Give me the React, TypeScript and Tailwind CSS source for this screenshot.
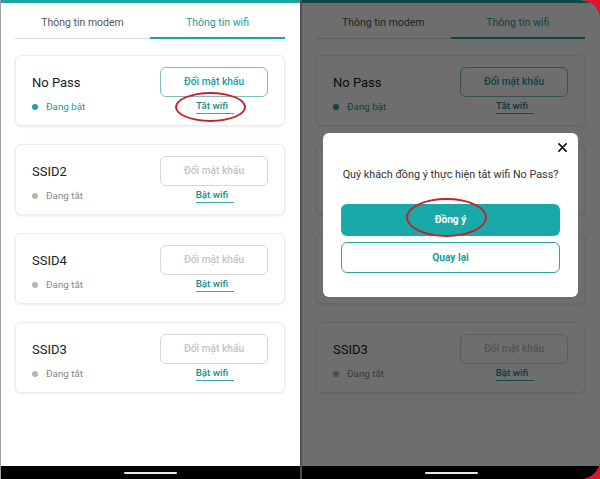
import React from "react";

type Network = {
  name: string;
  on: boolean;
};

const networks: Network[] = [
  { name: "No Pass", on: true },
  { name: "SSID2", on: false },
  { name: "SSID4", on: false },
  { name: "SSID3", on: false },
];

function WifiCard({ network, circled, covered }: { network: Network; circled?: boolean; covered?: boolean }) {
  // covered cards sit fully under the dialog, so only their box shows
  return (
    <div className="flex h-[71px] justify-between rounded-[6px] border border-[#ececec] bg-white pl-[16px] pr-[16px] pt-[11px] shadow-[0_1px_3px_rgba(0,0,0,0.08)]">
      <div className={`flex flex-col ${covered ? "invisible" : ""}`}>
        <p className="mt-[6px] text-[13px] leading-[20px] text-[#222]">{network.name}</p>
        <div className="mt-[7px] flex items-center gap-[8px] text-[9.8px] leading-[14px]">
          <span className={`h-[6px] w-[6px] rounded-full ${network.on ? "bg-[#1ba3a3]" : "bg-[#b5b5b5]"}`} />
          <span className={network.on ? "text-[#189c9c]" : "text-[#888]"}>{network.on ? "Đang bật" : "Đang tắt"}</span>
        </div>
      </div>
      <div className={`flex w-[108px] flex-col items-center ${covered ? "invisible" : ""}`}>
        <button
          type="button"
          className={`h-[30px] w-full rounded-[6px] border-[1.5px] text-[10.2px] font-medium ${
            network.on ? "border-[#80bcbc] text-[#17a0a0]" : "border-[#d8d8d8] text-[#c4c4c4]"
          }`}
        >
          Đổi mật khẩu
        </button>
        <div className="relative mt-[2px] flex pl-[2px]">
          <span className="border-b-[1.5px] border-[#3aa9a9] pr-[6px] text-[9.8px] font-medium leading-[14px] text-[#128f8f]">
            {network.on ? "Tắt wifi" : "Bật wifi"}
          </span>
          {circled && (
            <span className="absolute left-[-19px] top-[-7px] h-[30px] w-[71px] rounded-[50%] border-2 border-[#c9202c]" />
          )}
        </div>
      </div>
    </div>
  );
}

function WifiScreen({ circled, coveredRows = [] }: { circled?: boolean; coveredRows?: number[] }) {
  return (
    <div className="flex h-[466px] flex-col bg-white">
      <div className="h-[3px] bg-[#1ea6a6]" />
      <div className="flex pl-[14px] pr-[15px]">
        <div className="flex h-[36px] flex-1 items-center justify-center border-b border-[#dcdcdc] pt-[4px] text-[10.5px] text-[#555]">
          Thông tin modem
        </div>
        <div className="flex h-[36px] flex-1 items-center justify-center border-b-2 border-[#1ea3a3] pt-[5px] text-[10.5px] text-[#1a9d9d]">
          Thông tin wifi
        </div>
      </div>
      <div className="mt-[16px] flex flex-col gap-[18px] pl-[14px] pr-[15px]">
        {networks.map((network, index) => (
          <WifiCard
            key={network.name}
            network={network}
            circled={circled && index === 0}
            covered={coveredRows.includes(index)}
          />
        ))}
      </div>
    </div>
  );
}

function NavBar() {
  return (
    <div className="flex h-[13px] items-center justify-center bg-black">
      <div className="h-[2px] w-[53px] rounded-full bg-[#e8e8e8]" />
    </div>
  );
}

function ConfirmDialog() {
  return (
    <div className="absolute left-[21px] right-[22px] top-[133px] flex flex-col rounded-[6px] bg-white px-[18px] pb-[24px] pt-[10px]">
      <div className="flex h-[12px] justify-end">
        <svg viewBox="0 0 10 10" className="mr-[-7px] h-[9px] w-[9px]" fill="none" stroke="#111" strokeWidth="1.8" strokeLinecap="round">
          <path d="M1 1 L9 9 M9 1 L1 9" />
        </svg>
      </div>
      <p className="mx-[-10px] mt-[13px] text-center text-[10.8px] leading-[14px] text-[#333]">
        Quý khách đồng ý thực hiện tắt wifi No Pass?
      </p>
      <div className="relative mt-[22px]">
        <button type="button" className="h-[32px] w-full rounded-[6px] bg-[#19a9a9] text-[10.2px] font-bold text-white">
          Đồng ý
        </button>
        <span className="absolute left-[65px] top-[-6px] h-[39px] w-[81px] rounded-[50%] border-2 border-[#c9202c]" />
      </div>
      <button
        type="button"
        className="mt-[6px] h-[31px] w-full rounded-[6px] border-[1.5px] border-[#2aa8a8] bg-white text-[10.2px] font-bold text-[#189e9e]"
      >
        Quay lại
      </button>
    </div>
  );
}

export default function App() {
  return (
    <div className="flex h-[479px] w-[600px] bg-[#e3122b] font-['Roboto',sans-serif]">
      <div className="flex w-[300px] flex-col border-l border-[#9e9e9e] bg-black">
        <WifiScreen circled />
        <NavBar />
      </div>
      <div className="flex w-[300px] flex-col overflow-hidden rounded-br-[20px] rounded-tr-[20px] border-l-2 border-[#4e4e4e] bg-black">
        <div className="relative">
          <WifiScreen coveredRows={[1, 2]} />
          <div className="absolute inset-0 bg-black/[0.57]" />
          <ConfirmDialog />
        </div>
        <NavBar />
      </div>
    </div>
  );
}
